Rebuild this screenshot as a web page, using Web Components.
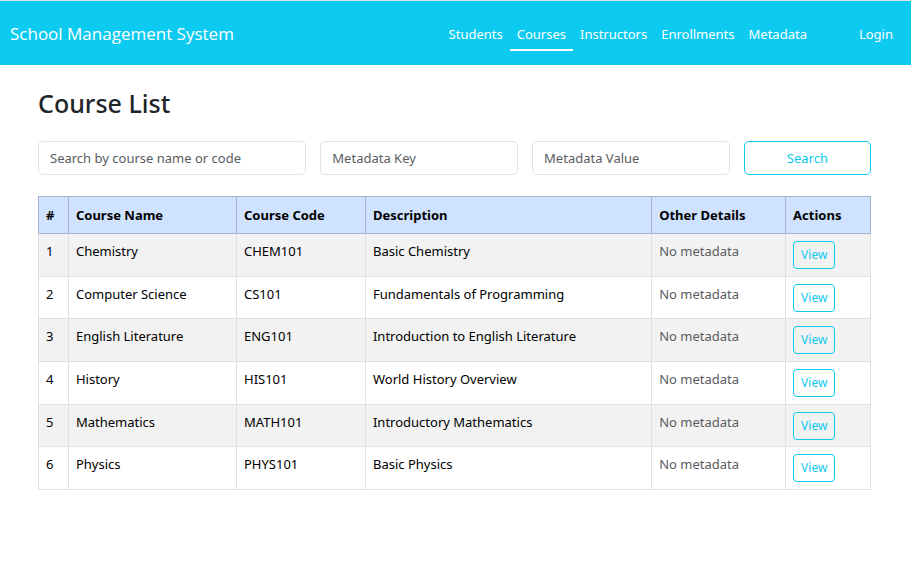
<!DOCTYPE html>
<html lang="en">
<head>
<meta charset="utf-8">
<title>School Management System</title>
<style>
  body { margin: 0; background: #fff; color: #212529; font-family: "Noto Sans", "Open Sans", sans-serif; font-size: 13px; line-height: 20px; }
</style>
</head>
<body>
<app-navbar>
  <span slot="brand">School Management System</span>
  <nav-link href="#students">Students</nav-link>
  <nav-link href="#courses" active>Courses</nav-link>
  <nav-link href="#instructors">Instructors</nav-link>
  <nav-link href="#enrollments">Enrollments</nav-link>
  <nav-link href="#metadata">Metadata</nav-link>
  <nav-link slot="account" href="#login">Login</nav-link>
</app-navbar>
<course-page>
  <span slot="title">Course List</span>
  <course-search></course-search>
  <course-table></course-table>
</course-page>

<script>
const define = (name, html, setup) => {
  const template = document.createElement('template');
  template.innerHTML = html;
  customElements.define(name, class extends HTMLElement {
    constructor() {
      super();
      this.attachShadow({ mode: 'open' }).append(template.content.cloneNode(true));
    }
    connectedCallback() { if (setup) setup(this, this.shadowRoot); }
  });
};

define('nav-link', `
<style>
  :host { display: block; }
  a { display: block; padding: 8px 7px 5px; border-bottom: 2px solid transparent; color: #fff; text-decoration: none; white-space: nowrap; }
  :host([active]) a { border-color: #fff; }
</style>
<a><slot></slot></a>`, (host, root) => {
  const link = root.querySelector('a');
  link.href = host.getAttribute('href');
  if (host.hasAttribute('active')) link.setAttribute('aria-current', 'page');
});

define('app-navbar', `
<style>
  :host { display: block; border-top: 1px solid #dee2e6; background: #0dcaf0; color: #fff; }
  header { display: flex; align-items: center; justify-content: space-between; min-height: 64px; padding: 0 11px 0 10px; }
  .brand { color: inherit; text-decoration: none; font-family: "Open Sans", "Noto Sans", sans-serif; font-size: 17px; line-height: 27px; }
  .links { display: flex; align-items: center; gap: 38px; }
  nav { display: flex; }
</style>
<header>
  <a class="brand" href="#home"><slot name="brand"></slot></a>
  <div class="links"><nav aria-label="Main"><slot></slot></nav><slot name="account"></slot></div>
</header>`);

define('course-page', `
<style>
  :host { display: block; padding: 21px 40px 24px 38px; }
  h2 { margin: 0 0 21px; font-size: 25px; line-height: 34px; font-weight: 500; }
</style>
<main><h2><slot name="title"></slot></h2><slot></slot></main>`);

define('outline-button', `
<style>
  :host { display: block; }
  button { width: 100%; box-sizing: border-box; padding: 6px 10px; border: 1px solid #0dcaf0; border-radius: 5px; background: transparent; color: #0dcaf0; font: inherit; cursor: pointer; }
  :host([small]) { display: inline-block; vertical-align: top; font-size: 12px; }
  :host([small]) button { display: block; padding: 3px 7px; border-radius: 4px; }
</style>
<button type="button"><slot></slot></button>`);

define('course-search', `
<style>
  :host { display: block; margin-bottom: 21px; }
  form { display: grid; grid-template-columns: repeat(12, minmax(0, 1fr)); gap: 14px; }
  label { display: block; grid-column: span 3; }
  label:first-child { grid-column: span 4; }
  outline-button { grid-column: span 2; }
  input { display: block; width: 100%; box-sizing: border-box; padding: 6px 11px; border: 1px solid #dee2e6; border-radius: 5px; background: #fff; color: inherit; font: inherit; }
  input::placeholder { color: #595c5f; opacity: 1; }
</style>
<form>
  <label><input type="text" aria-label="Search by course name or code" placeholder="Search by course name or code"></label>
  <label><input type="text" aria-label="Metadata Key" placeholder="Metadata Key"></label>
  <label><input type="text" aria-label="Metadata Value" placeholder="Metadata Value"></label>
  <outline-button>Search</outline-button>
</form>`);

define('course-table', `
<style>
  :host { display: block; }
  table { width: 100%; height: 294px; table-layout: fixed; border-collapse: collapse; color: #000; }
  th, td { padding: 7px 7px 6px; border: 1px solid #dee2e6; text-align: left; vertical-align: top; }
  th { padding: 8px 7px; background: #cfe2ff; border-color: #a6b5cc; font-weight: 700; }
  thead tr { height: 37px; }
  tbody tr:nth-child(odd) { background: #f2f2f2; }
  .muted { color: #595c5f; }
</style>
<table>
  <colgroup>
    <col style="width:3.6%"><col style="width:20.2%"><col style="width:15.5%"><col style="width:34.4%"><col style="width:16.1%"><col style="width:10.2%">
  </colgroup>
  <thead><tr><th>#</th><th>Course Name</th><th>Course Code</th><th>Description</th><th>Other Details</th><th>Actions</th></tr></thead>
  <tbody></tbody>
</table>`, (host, root) => {
  const courses = [
    ['Chemistry', 'CHEM101', 'Basic Chemistry'],
    ['Computer Science', 'CS101', 'Fundamentals of Programming'],
    ['English Literature', 'ENG101', 'Introduction to English Literature'],
    ['History', 'HIS101', 'World History Overview'],
    ['Mathematics', 'MATH101', 'Introductory Mathematics'],
    ['Physics', 'PHYS101', 'Basic Physics']
  ];
  root.querySelector('tbody').innerHTML = courses.map(([name, code, text], i) =>
    `<tr><td>${i + 1}</td><td>${name}</td><td>${code}</td><td>${text}</td><td class="muted">No metadata</td><td><outline-button small>View</outline-button></td></tr>`).join('');
});
</script>
</body>
</html>
